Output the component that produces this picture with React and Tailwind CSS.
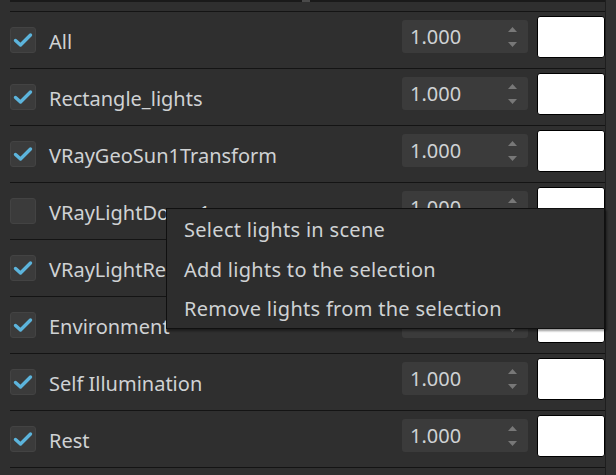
import React from 'react';

const rows = [
  { name: 'All', checked: true },
  { name: 'Rectangle_lights', checked: true },
  { name: 'VRayGeoSun1Transform', checked: true },
  { name: 'VRayLightDome1', checked: false },
  { name: 'VRayLightRect', checked: true },
  { name: 'Environment', checked: true },
  { name: 'Self Illumination', checked: true },
  { name: 'Rest', checked: true },
];

const menuItems = [
  'Select lights in scene',
  'Add lights to the selection',
  'Remove lights from the selection',
];

const Check = ({ checked }) => (
  <div className="w-[26px] h-[26px] shrink-0 rounded-[3px] bg-[#3b3b3b] border border-[#434343] flex items-center justify-center">
    {checked && (
      <svg width="20" height="16" viewBox="0 0 20 16">
        <path d="M2.5 8.5 L7.5 13 L17.5 3" fill="none" stroke="#5cb4dc" strokeWidth="3.4" strokeLinecap="round" strokeLinejoin="round" />
      </svg>
    )}
  </div>
);

const Spinner = () => (
  <div className="mt-[8px] w-[126px] h-[33px] rounded-[3px] bg-[#3b3b3b] flex items-center pl-[8px] pr-[11px]">
    <span className="flex-1 text-[20px] text-[#cfd2d4] leading-none">1.000</span>
    <div className="flex flex-col gap-[10px] items-center">
      <svg width="9" height="5" viewBox="0 0 9 5"><path d="M4.5 0 L9 5 L0 5 Z" fill="#787878" /></svg>
      <svg width="9" height="5" viewBox="0 0 9 5"><path d="M0 0 L9 0 L4.5 5 Z" fill="#787878" /></svg>
    </div>
  </div>
);

const Row = ({ name, checked }) => (
  <div className="h-[57px] border-t border-[#141414] flex">
    <div className="flex-1 flex items-center gap-[13px]">
      <Check checked={checked} />
      <span className="mt-[3px] text-[20px] text-[#cfd2d4] whitespace-nowrap">{name}</span>
    </div>
    <div className="flex items-start gap-[9px]">
      <Spinner />
      <div className="mt-[4px] w-[68px] h-[42px] bg-white border border-black rounded-[3px]" />
    </div>
  </div>
);

const App = () => {
  return (
    <div
      className="relative w-[616px] h-[475px] overflow-hidden bg-[#2f2f2f] flex"
      style={{ fontFamily: '"Noto Sans", "Open Sans", sans-serif' }}
    >
      <div className="w-[605px] pl-[10px] flex flex-col">
        {/* top edge of previous panel */}
        <div className="h-[11px] relative">
          <div className="h-[2px] bg-[#1a1a1a]" />
          <div className="absolute left-[292px] top-0 w-[8px] h-[2px] bg-[#4a4a4a]" />
        </div>
        {rows.map((r) => (
          <Row key={r.name} {...r} />
        ))}
        <div className="border-t border-[#141414]" />
      </div>
      <div className="flex-1 border-l border-[#1e1e1e] bg-[#313131]" />

      {/* context menu */}
      <div className="absolute left-[166px] top-[208px] w-[439px] h-[121px] bg-[#2d2d2d] border border-[#101010] shadow-[2px_2px_2px_rgba(0,0,0,0.4)] flex flex-col">
        {menuItems.map((m) => (
          <div key={m} className="h-[40px] flex items-center pt-[2px] pl-[17px] text-[20px] tracking-[0.3px] text-[#cfd2d4] whitespace-nowrap">
            {m}
          </div>
        ))}
      </div>
    </div>
  );
};

export default App;
